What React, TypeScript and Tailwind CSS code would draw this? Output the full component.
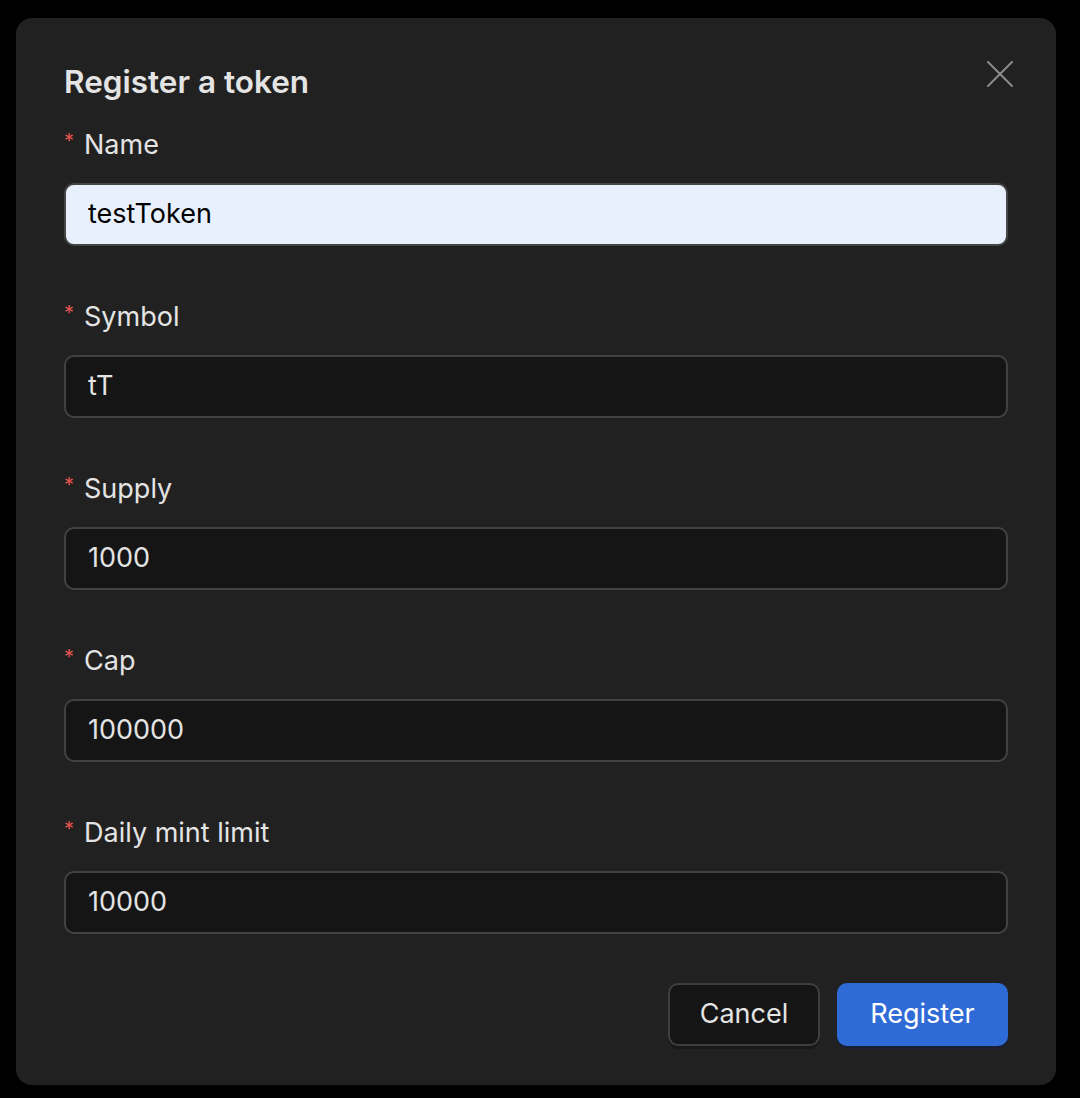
import { X } from 'lucide-react';

const fields = [
  { label: 'Name', value: 'testToken', autofilled: true },
  { label: 'Symbol', value: 'tT' },
  { label: 'Supply', value: '1000' },
  { label: 'Cap', value: '100000' },
  { label: 'Daily mint limit', value: '10000' },
];

export default function App() {
  return (
    <div className="min-h-[1098px] w-[1080px] bg-black pt-[18px] pl-4 font-['Inter',sans-serif]">
      <div className="relative w-[1040px] h-[1067px] rounded-2xl bg-[#212121] px-12 pt-[46px]">
        {/* Header */}
        <h2 className="text-[31.5px] leading-9 font-semibold text-[#e4e4e4]">Register a token</h2>
        <button className="absolute right-[32px] top-[32px] text-[#8c8c8c]">
          <X className="w-12 h-12" strokeWidth={1} />
        </button>

        {/* Fields */}
        <div className="mt-[29px] flex flex-col gap-[55px]">
          {fields.map((field) => (
            <div key={field.label}>
              <label className="flex items-center text-[27px] leading-8 text-[#e4e4e4]">
                <span className="text-[#e0524f] text-[20px] mr-[10px] -mt-2">*</span>
                {field.label}
              </label>
              <div
                className={`mt-[22px] h-[63px] rounded-[10px] border-2 flex items-center px-[22px] text-[27px] ${
                  field.autofilled
                    ? 'bg-[#e8f0fe] border-[#454545] text-black'
                    : 'bg-[#151515] border-[#424242] text-[#e4e4e4]'
                }`}
              >
                {field.value}
              </div>
            </div>
          ))}
        </div>

        {/* Actions */}
        <div className="mt-[49px] flex justify-end gap-[17px]">
          <button className="h-[63px] w-[152px] rounded-[10px] border-2 border-[#3e3e3e] bg-[#151515] text-[27px] text-[#e4e4e4] shadow-[0_3px_0_rgba(0,0,0,0.25)]">
            Cancel
          </button>
          <button className="h-[63px] w-[171px] rounded-[10px] bg-[#2f6bd6] text-[27px] text-white shadow-[0_3px_0_rgba(20,30,60,0.6)]">
            Register
          </button>
        </div>
      </div>
    </div>
  );
}
